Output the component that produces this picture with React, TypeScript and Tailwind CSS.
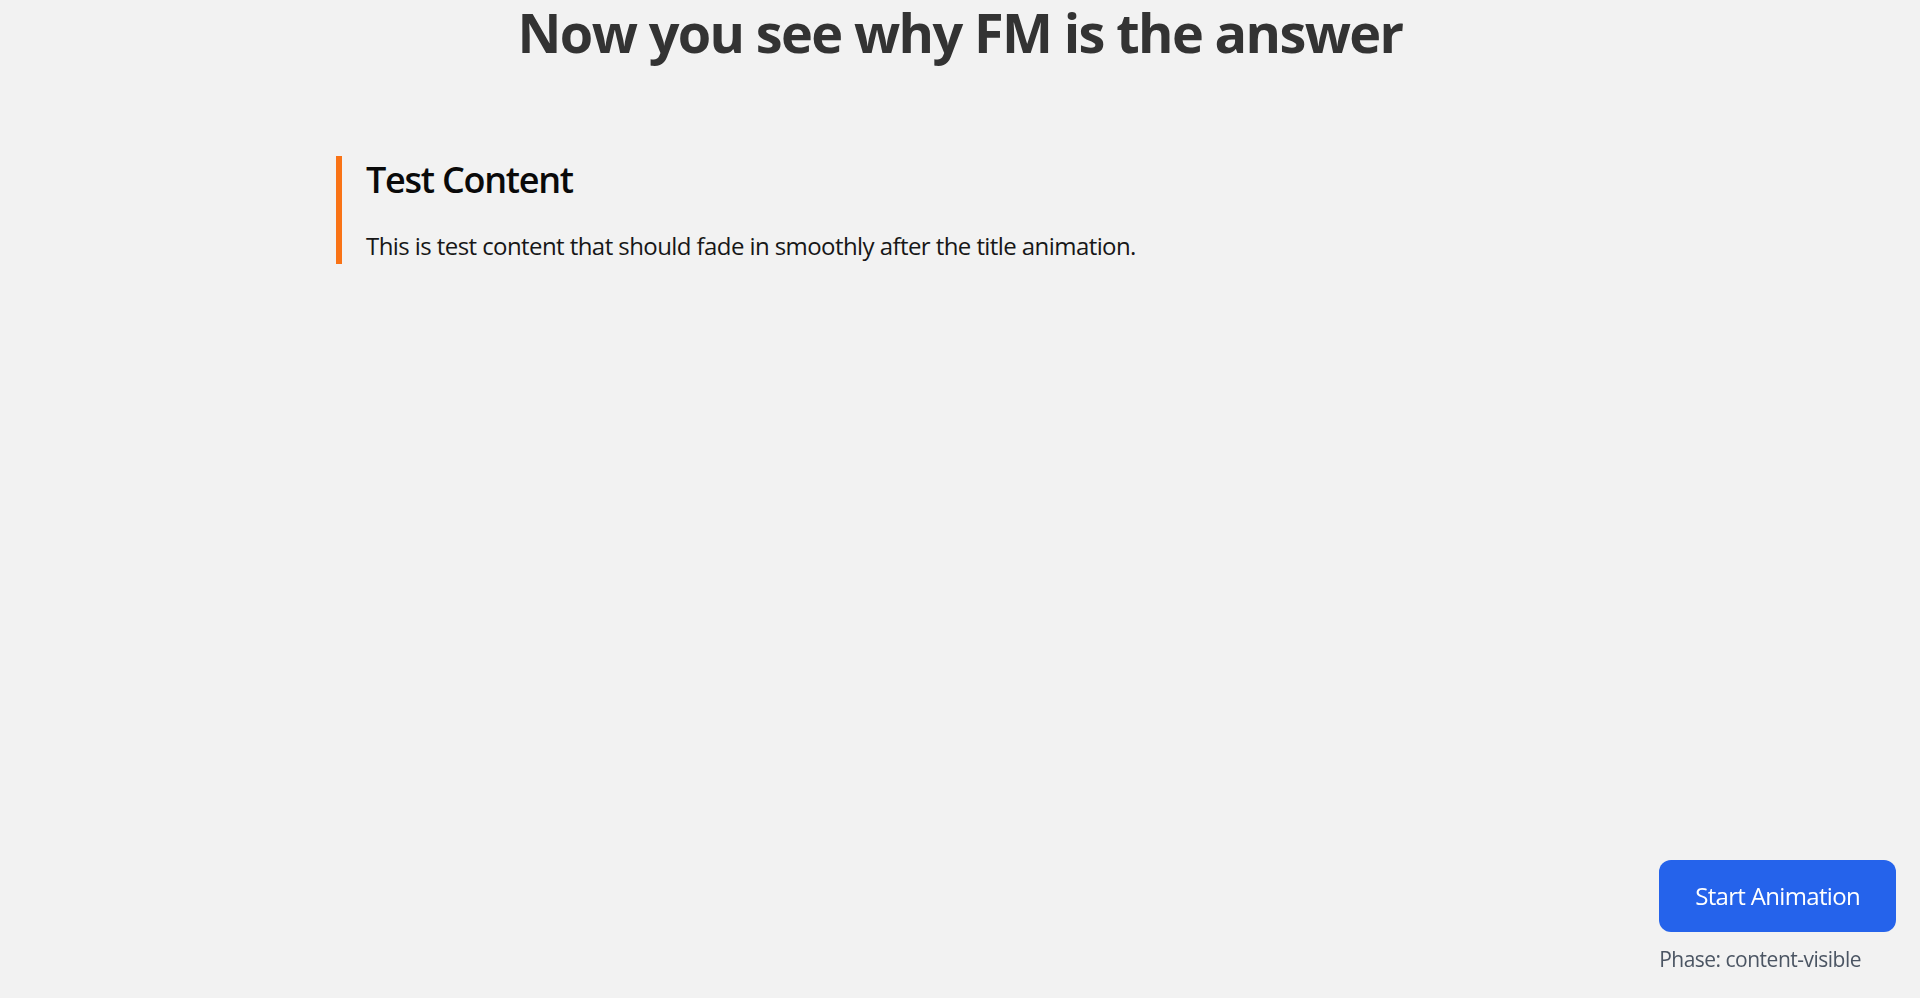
export default function App() {
  return (
    <div
      className="min-h-screen bg-[#f2f2f2] text-[#111]"
      style={{ fontFamily: '"Open Sans", "Noto Sans", Arial, sans-serif' }}
    >
      <h1 className="text-center text-[54px] leading-[64px] font-bold tracking-[-0.03em] text-[#333]">
        Now you see why FM is the answer
      </h1>

      <div className="mx-auto mt-[92px] w-[1248px]">
        <div className="border-l-[6px] border-[#f97316] pl-6">
          <h2 className="text-[36px] leading-[48px] font-semibold tracking-[-0.035em] text-[#0a0a0a]">
            Test Content
          </h2>
          <p className="mt-6 text-[24px] leading-[36px] tracking-[-0.024em] text-[#171717]">
            This is test content that should fade in smoothly after the title animation.
          </p>
        </div>
      </div>

      <div className="fixed right-6 bottom-6 flex flex-col items-start">
        <button className="rounded-xl bg-[#2563eb] px-9 py-[18px] text-[24px] leading-[36px] tracking-[-0.028em] text-white">
          Start Animation
        </button>
        <p className="mt-3 text-[21px] leading-[30px] tracking-[-0.024em] text-[#4b5563]">
          Phase: content-visible
        </p>
      </div>
    </div>
  );
}
